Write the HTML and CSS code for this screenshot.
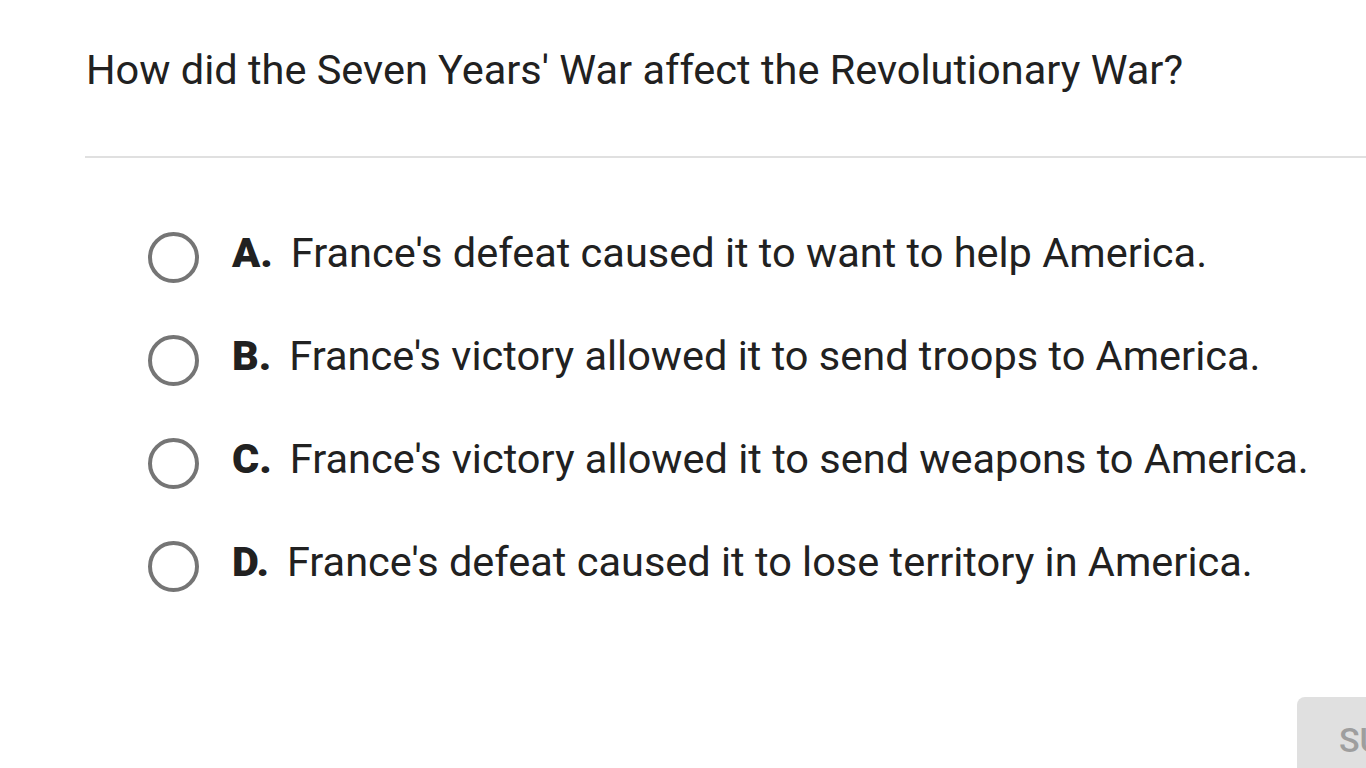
FILE: index.html
```html
<!DOCTYPE html>
<html lang="en">
<head>
<meta charset="utf-8">
<title>Question</title>
<link rel="stylesheet" href="styles.css">
</head>
<body>
<main class="page">
  <section class="question">
    <h1 class="prompt">How did the Seven Years' War affect the Revolutionary War?</h1>
    <div class="rule"></div>
  </section>
  <ul class="options">
    <li class="option"><span class="radio"></span><span class="letter">A.</span><span class="text">France's defeat caused it to want to help America.</span></li>
    <li class="option"><span class="radio"></span><span class="letter">B.</span><span class="text">France's victory allowed it to send troops to America.</span></li>
    <li class="option"><span class="radio"></span><span class="letter">C.</span><span class="text">France's victory allowed it to send weapons to America.</span></li>
    <li class="option"><span class="radio"></span><span class="letter">D.</span><span class="text">France's defeat caused it to lose territory in America.</span></li>
  </ul>
  <div class="actions">
    <button class="submit" type="button">SUBMIT</button>
  </div>
</main>
</body>
</html>
```
FILE: styles.css
```css
html, body {
  margin: 0;
  padding: 0;
  background: #ffffff;
  overflow: hidden;
}
body {
  font-family: Roboto, "Liberation Sans", sans-serif;
  color: #212121;
  width: 1366px;
  height: 768px;
}
.page {
  display: flex;
  flex-direction: column;
  height: 768px;
  padding-left: 85px;
  box-sizing: border-box;
}
.prompt {
  margin: 0;
  padding-top: 42px;
  padding-left: 1px;
  font-size: 41.5px;
  font-weight: 400;
  line-height: 56px;
}
.rule {
  margin-top: 58px;
  height: 2px;
  background: #e0e0e0;
}
.options {
  list-style: none;
  margin: 0;
  padding: 0 0 0 63px;
  margin-top: 73px;
  display: flex;
  flex-direction: column;
  gap: 51px;
}
.option {
  display: flex;
  align-items: center;
  height: 52px;
}
.radio {
  width: 43px;
  height: 43px;
  border: 4px solid #757575;
  border-radius: 50%;
  flex: none;
}
.letter,
.text {
  font-size: 41.5px;
  line-height: 52px;
  margin-top: -8px;
}
.letter {
  margin-left: 33px;
  margin-right: 18px;
  font-weight: 900;
}
.actions {
  margin-top: auto;
  display: flex;
  justify-content: flex-end;
}
.submit {
  margin-right: -160px;
  width: 229px;
  height: 71px;
  border: none;
  border-radius: 8px 8px 0 0;
  background: #e0e0e0;
  color: #9e9e9e;
  font-family: Roboto, "Liberation Sans", sans-serif;
  font-size: 34px;
  font-weight: 500;
  text-align: left;
  padding: 14px 0 0 42px;
}
```
